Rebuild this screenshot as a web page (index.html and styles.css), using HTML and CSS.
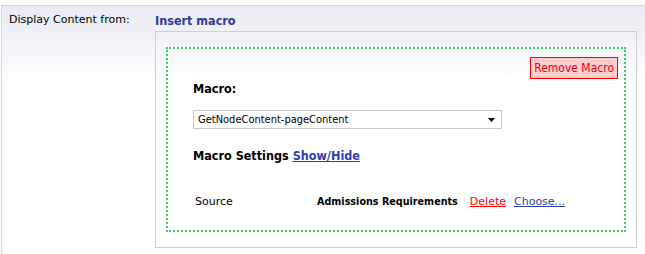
FILE: index.html
```html
<!DOCTYPE html>
<html>
<head>
<meta charset="utf-8">
<link rel="stylesheet" href="styles.css">
</head>
<body>
<div class="panel">
  <div class="label">Display Content from:</div>
  <div class="field">
    <h3 class="title">Insert macro</h3>
    <div class="box">
      <div class="dotted">
        <div class="remove-row"><span class="remove-btn">Remove Macro</span></div>
        <div class="heading">Macro:</div>
        <div class="select">
          <span>GetNodeContent-pageContent</span>
          <svg class="arrow" width="7" height="4" viewBox="0 0 7 4"><path d="M0 0H7L3.5 4Z" fill="#000"/></svg>
        </div>
        <div class="heading settings">Macro Settings <a class="link blue">Show/Hide</a></div>
        <div class="row">
          <span class="col-name">Source</span>
          <span class="col-value"><b>Admissions Requirements</b><a class="link red">Delete</a><a class="link blue">Choose...</a></span>
        </div>
      </div>
    </div>
  </div>
</div>
</body>
</html>
```
FILE: styles.css
```css
html, body {
  margin: 0;
  padding: 0;
  background: #fff;
}
body {
  font-family: "DejaVu Sans Condensed", "DejaVu Sans", sans-serif;
  font-size: 11px;
  color: #000;
}
.panel {
  margin: 5px 0 0 1px;
  height: 249px;
  box-sizing: border-box;
  border-top: 1px solid #d6d6dc;
  border-left: 1px solid #d6d6dc;
  background: linear-gradient(#ebebf3 0px, #f3f3f8 40px, #ffffff 75px);
  display: flex;
}
.label {
  width: 146px;
  padding: 7px 0 0 7px;
  line-height: 14px;
  font-family: "DejaVu Sans", sans-serif;
}
.field {
  display: flex;
  flex-direction: column;
}
.title {
  margin: 0;
  padding: 6px 0 0 0;
  height: 25px;
  box-sizing: border-box;
  font-size: 12.5px;
  font-weight: bold;
  line-height: 17px;
  color: #2d3a9e;
}
.box {
  width: 482px;
  height: 217px;
  box-sizing: border-box;
  border: 1px solid #cfcfd4;
  padding: 15px 10px 15px 10px;
}
.dotted {
  height: 185px;
  box-sizing: border-box;
  border: 2px dotted #3fcc66;
  padding: 8px 6px 0 25px;
}
.remove-row {
  display: flex;
  justify-content: flex-end;
}
.remove-btn {
  display: flex;
  align-items: center;
  height: 22px;
  box-sizing: border-box;
  padding: 0 3px;
  border: 1px solid #f00;
  background: #ffcccc;
  color: #e8001c;
  font-size: 12px;
}
.heading {
  font-weight: bold;
  font-size: 12.5px;
  line-height: 16px;
  margin-top: 2px;
}
.select {
  margin-top: 13px;
  width: 309px;
  height: 19px;
  box-sizing: border-box;
  border: 1px solid #c8c8c8;
  background: #fff;
  display: flex;
  align-items: center;
  justify-content: space-between;
  padding: 0 6px 0 4px;
  font-size: 11px;
}
.arrow {
  display: block;
}
.settings {
  margin-top: 19px;
}
.link {
  text-decoration: underline;
  cursor: pointer;
}
.blue {
  color: #2b3fb0;
}
.red {
  color: #f00;
}
.row {
  margin-top: 31px;
  display: flex;
  line-height: 14px;
}
.col-name {
  width: 122px;
  padding-left: 2px;
  font-family: "DejaVu Sans", sans-serif;
}
.col-value {
  display: flex;
  gap: 8px;
}
.col-value b {
  font-size: 10.7px;
  margin-right: 4px;
}
.col-value .link {
  font-family: "DejaVu Sans", sans-serif;
}
```
